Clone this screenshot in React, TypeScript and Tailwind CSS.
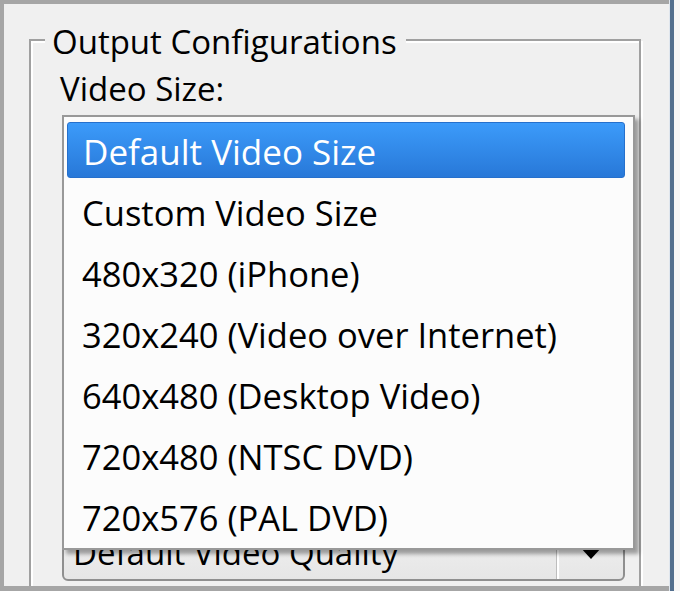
const sizes = [
  "Default Video Size",
  "Custom Video Size",
  "480x320 (iPhone)",
  "320x240 (Video over Internet)",
  "640x480 (Desktop Video)",
  "720x480 (NTSC DVD)",
  "720x576 (PAL DVD)",
];

function ComboArrow() {
  return (
    <svg width="22" height="12" viewBox="0 0 22 12">
      <polygon points="0,0 22,0 11,12" fill="#000" />
    </svg>
  );
}

export default function App() {
  const selected = 0;

  return (
    <div className="flex h-[591px] w-[680px] overflow-hidden bg-[#f0f0f0] font-['Open_Sans','Noto_Sans',sans-serif] text-black">
      {/* dialog client area */}
      <div className="h-full w-[669px] shrink-0 overflow-hidden border-b-[5px] border-l-[4px] border-t-[4px] border-[#a6a6a6] pl-[25px] pt-[35px]">
        <div className="h-[620px] w-[612px] border-2 border-[#a0a0a0] shadow-[inset_2px_2px_0_#fff,2px_2px_0_#fff]">
          <span className="-mt-[19px] ml-[14px] block h-[40px] w-fit bg-[#f0f0f0] pl-[7px] pr-[9px] text-[33px] leading-[40px]">
            Output Configurations
          </span>
          <div className="ml-[29px] mt-[7px] text-[33px] leading-[40px]">Video Size:</div>

          {/* open dropdown list */}
          <div className="relative z-10 ml-[31px] mt-[6px] w-[573px] border-2 border-[#999] bg-[#fcfcfc] pb-[1px] pt-[3px] shadow-[4px_4px_4px_rgba(0,0,0,0.35)]">
            {sizes.map((s, i) =>
              i === selected ? (
                <div key={s} className="h-[61px] pt-[2px]">
                  <div className="ml-[3px] mr-[8px] flex h-[56px] items-center rounded-[3px] border border-[#2670cc] bg-gradient-to-b from-[#3c9bfa] to-[#2878d8] pl-[15px] pt-[3px] text-[35px] leading-[53px] text-white">
                    {s}
                  </div>
                </div>
              ) : (
                <div key={s} className="flex h-[61px] items-center pl-[18px] pt-[3px] text-[34.5px] leading-[58px]">
                  {s}
                </div>
              )
            )}
          </div>

          {/* combobox underneath the popup */}
          <div className="ml-[31px] -mt-[29px] flex h-[60px] w-[563px] rounded-b-[6px] border-2 border-[#8f8f8f] bg-gradient-to-b from-[#f2f2f2] to-[#e6e6e6]">
            <div className="flex flex-1 items-center pl-[9px] pt-[4px] text-[33px] leading-[40px]">
              Default Video Quality
            </div>
            <div className="w-[3px] border-l border-[#bdbdbd] bg-white" />
            <div className="flex w-[64px] items-center justify-center pt-[4px]">
              <ComboArrow />
            </div>
          </div>
        </div>
      </div>

      {/* window frame edge */}
      <div className="h-full w-[1px] bg-[#dfe6ee]" />
      <div className="h-full w-[4px] bg-[#536f8e]" />
      <div className="h-full flex-1 bg-[#f6f6f6]" />
    </div>
  );
}
